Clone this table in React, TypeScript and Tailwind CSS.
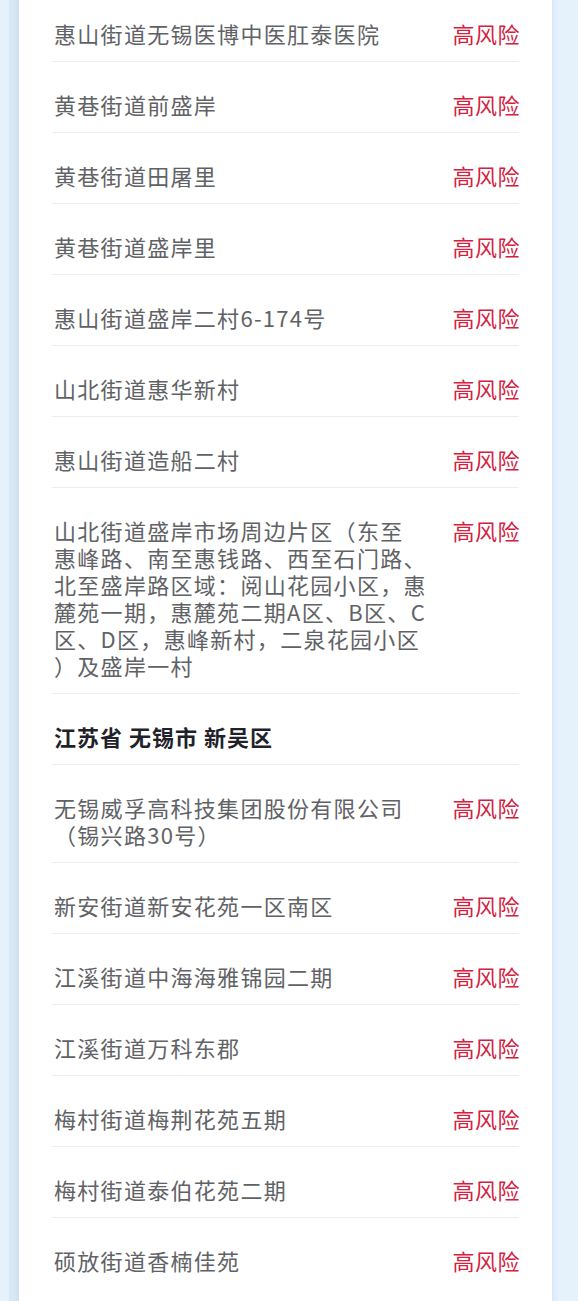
import React from 'react';

type Row =
  | { kind: 'item'; lines: string[] }
  | { kind: 'area'; title: string };

const rows: Row[] = [
  { kind: 'item', lines: ['惠山街道无锡医博中医肛泰医院'] },
  { kind: 'item', lines: ['黄巷街道前盛岸'] },
  { kind: 'item', lines: ['黄巷街道田屠里'] },
  { kind: 'item', lines: ['黄巷街道盛岸里'] },
  { kind: 'item', lines: ['惠山街道盛岸二村6-174号'] },
  { kind: 'item', lines: ['山北街道惠华新村'] },
  { kind: 'item', lines: ['惠山街道造船二村'] },
  {
    kind: 'item',
    lines: [
      '山北街道盛岸市场周边片区（东至',
      '惠峰路、南至惠钱路、西至石门路、',
      '北至盛岸路区域：阅山花园小区，惠',
      '麓苑一期，惠麓苑二期A区、B区、C',
      '区、D区，惠峰新村，二泉花园小区',
      '）及盛岸一村',
    ],
  },
  { kind: 'area', title: '江苏省 无锡市 新吴区' },
  { kind: 'item', lines: ['无锡威孚高科技集团股份有限公司', '（锡兴路30号）'] },
  { kind: 'item', lines: ['新安街道新安花苑一区南区'] },
  { kind: 'item', lines: ['江溪街道中海海雅锦园二期'] },
  { kind: 'item', lines: ['江溪街道万科东郡'] },
  { kind: 'item', lines: ['梅村街道梅荆花苑五期'] },
  { kind: 'item', lines: ['梅村街道泰伯花苑二期'] },
  { kind: 'item', lines: ['硕放街道香楠佳苑'] },
];

export default function App() {
  return (
    <div
      className="min-h-[1301px] w-[578px] overflow-hidden bg-[#e5f1fb] pl-[9px] pr-[26px]"
      style={{ fontFamily: '"Noto Sans CJK SC", "Noto Sans", sans-serif' }}
    >
      <div className="border-l-[10px] border-[#d9e8f5]">
        {/* list card */}
        <div className="-mt-[10px] min-h-[1320px] bg-white px-[33px] shadow-[0_0_6px_rgba(150,190,225,0.35)]">
          {rows.map((row, idx) =>
            row.kind === 'area' ? (
              <div
                key={idx}
                className="border-t border-[#eeeeee] pt-[29px] pb-[14px] pl-[2px] text-[22px] leading-[27px] tracking-[1px] font-bold text-[#1f2329]"
              >
                {row.title}
              </div>
            ) : (
              <div
                key={idx}
                className="flex items-start justify-between border-t border-[#eeeeee] pt-[29px] pb-[14px] pl-[2px] text-[22px] leading-[27px] tracking-[1.3px]"
              >
                <div className="text-[#606266] whitespace-nowrap">
                  {row.lines.map((l, i) => (
                    <div key={i}>{l}</div>
                  ))}
                </div>
                <div className="shrink-0 -mr-[1px] tracking-[0.5px] text-[#d3213f]">高风险</div>
              </div>
            )
          )}
        </div>
      </div>
    </div>
  );
}
